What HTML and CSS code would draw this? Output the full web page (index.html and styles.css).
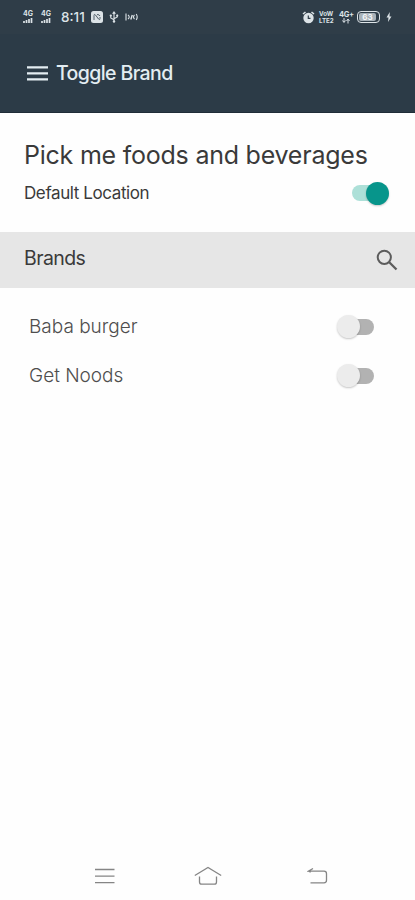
FILE: index.html
```html
<!DOCTYPE html>
<html lang="en">
<head>
<meta charset="utf-8">
<title>Toggle Brand</title>
<link rel="stylesheet" href="styles.css">
</head>
<body>
<div class="screen">
  <header class="top">
    <div class="status">
      <div class="status-left">
        <div class="signal"><span>4G</span><svg width="11" height="5" viewBox="0 0 11 5"><path d="M1 5V3M3.500 5V2M6 5V1M8.500 5V0" stroke="currentColor" stroke-width="1.700"/></svg></div>
        <div class="signal second"><span>4G</span><svg width="11" height="5" viewBox="0 0 11 5"><path d="M1 5V3M3.500 5V2M6 5V1M8.500 5V0" stroke="currentColor" stroke-width="1.700"/></svg></div>
        <span class="clock">8:11</span>
        <svg class="nfc" width="12" height="12" viewBox="0 0 12 12"><rect width="12" height="12" rx="2.500" fill="currentColor"/><path d="M3 9V4.500Q3 2.500 4.500 4L7.500 8Q9 9.500 9 7.500V6M6 3.500q2.500 0 3 1.500" fill="none" stroke="#53616c" stroke-width="1"/></svg>
        <svg class="usb" width="10" height="12" viewBox="0 0 10 13"><path d="M5 12V1M3.500 3 5 1l1.500 2M5 9.500 1.500 7.500V4.500M5 8.500l3.500-2V4" fill="none" stroke="currentColor" stroke-width="1.200"/><circle cx="5" cy="11.300" r="1.300" fill="currentColor"/><circle cx="1.500" cy="5" r="1.200" fill="currentColor"/><circle cx="8.500" cy="5" r="1.200" fill="currentColor"/></svg>
        <svg class="cast" width="13" height="12" viewBox="0 0 13 12"><path d="M1 2.500v7M3 4q2.500 2 0 4M9.500 4q-2 2 0 4M11.200 3q2 3 0 6" fill="none" stroke="currentColor" stroke-width="1.100"/><path d="M5.800 8.500 7.300 4" stroke="currentColor" stroke-width="1.400"/></svg>
      </div>
      <div class="status-right">
        <svg class="alarm" width="13" height="13" viewBox="0 0 13 13"><circle cx="6.500" cy="7" r="5.200" fill="currentColor"/><path d="M1 3 3.500 1M12 3 9.500 1" stroke="currentColor" stroke-width="1.600"/><path d="M6.300 4.500V7.300H8.500" fill="none" stroke="#2e3c47" stroke-width="1.200"/></svg>
        <div class="volte"><span>VoW</span><span>LTE2</span></div>
        <div class="data"><span>4G+</span><svg width="8" height="6" viewBox="0 0 8 6"><path d="M2 0v4M.5 2.500 2 4.500l1.500-2M6 5.500v-4M4.500 3 6 1l1.500 2" stroke="currentColor" fill="none"/></svg></div>
        <div class="battery"><span>63</span></div>
        <svg class="bolt" width="6" height="10" viewBox="0 0 6 10"><path d="M3.800 0 .5 5.500h2L2 10l3.500-5.500h-2z" fill="currentColor"/></svg>
      </div>
    </div>
    <div class="appbar">
      <svg class="menu" width="21" height="15" viewBox="0 0 21 15"><path d="M0 1.300h21M0 7.300h21M0 13.300h21" stroke="currentColor" stroke-width="2.300"/></svg>
      <h1>Toggle Brand</h1>
    </div>
  </header>
  <section class="place">
    <h2>Pick me foods and beverages</h2>
    <div class="location"><span>Default Location</span><span class="switch on"></span></div>
  </section>
  <div class="brands">
    <h3>Brands</h3>
    <svg width="22" height="22" viewBox="0 0 22 22" fill="none" stroke="#5c5c5c"><circle cx="8.300" cy="8.300" r="6.600" stroke-width="2"/><path d="m13 13 7.500 7.500" stroke-width="2.300"/></svg>
  </div>
  <ul class="list">
    <li><span>Baba burger</span><span class="switch"></span></li>
    <li><span>Get Noods</span><span class="switch"></span></li>
  </ul>
  <nav class="navbar">
    <svg width="20" height="16" viewBox="0 0 20 16" stroke="#858585"><path d="M0 1.500h19.500M0 8.200h19.500M0 14.700h19.500" stroke-width="1.300"/></svg>
    <svg class="home" width="28" height="20" viewBox="0 0 28 20" fill="none" stroke="#858585" stroke-width="1.300"><path d="M.8 9.500 14 1.500l13.200 8M5.500 10.500v5.500q0 2.200 2.200 2.200h12.600q2.200 0 2.200-2.200v-5.500"/></svg>
    <svg width="21" height="18" viewBox="0 0 21 18" fill="none" stroke="#858585" stroke-width="1.300"><path d="M6 1.500 1.500 4.200H17q2.500 0 2.500 2.500v6.600q0 2.500-2.500 2.500H3.500M1.500 4.200l2.200 1"/></svg>
  </nav>
</div>
</body>
</html>
```
FILE: styles.css
```css
* { box-sizing: border-box; }
body { margin: 0; background: #fefefe; font-family: Inter, "Liberation Sans", sans-serif; color: #3a3a3a; }
h1, h2, h3, ul { margin: 0; padding: 0; font-weight: 400; list-style: none; }
svg { display: block; flex: none; }
.screen { width: 415px; height: 900px; display: flex; flex-direction: column; }
.top { height: 113px; background: #2c3b47; border-bottom: 1px solid #202d38; color: #e3edf2; }
.status { height: 34px; padding: 0 23px; display: flex; justify-content: space-between; align-items: center; background: #2f3d48; color: #dce3e7; }
.status-left, .status-right { display: flex; align-items: center; height: 34px; }
.signal { width: 11px; height: 12px; font-size: 7px; font-weight: 700; line-height: 6px; }
.signal span { display: block; height: 7px; }
.second { margin-left: 7px; }
.clock { width: 26px; margin-left: 9px; font-size: 13.500px; font-weight: 500; line-height: 16px; white-space: nowrap; }
.nfc { margin-left: 4px; }
.usb { margin-left: 6px; }
.cast { margin-left: 6px; }
.volte { width: 16px; margin-left: 4px; font-size: 6.200px; font-weight: 700; line-height: 7px; }
.volte span { display: block; }
.data { width: 14px; height: 13px; margin-left: 4px; font-size: 7.500px; font-weight: 700; line-height: 7px; letter-spacing: -.4px; }
.data span { display: block; }
.data svg { margin-left: 3px; }
.battery { width: 23px; height: 12px; margin-left: 4px; border: 1.500px solid currentColor; border-radius: 4px; padding: 1px 3px 1px 1px; }
.battery span { display: block; height: 8px; border-radius: 2px; background: #a8b2b9; color: #f4f6f7; font-size: 8px; font-weight: 700; line-height: 8px; text-align: center; }
.bolt { margin-left: 6px; }
.appbar { height: 78px; padding-left: 27px; display: flex; align-items: center; }
h1 { margin-left: 8px; font-size: 19.500px; font-weight: 500; line-height: 26px; letter-spacing: -.6px; white-space: nowrap; }
.place { height: 119px; padding: 25px 26px 0 24px; }
h2 { font-size: 25px; line-height: 34px; letter-spacing: -.23px; white-space: nowrap; }
.location { display: flex; height: 42px; align-items: center; justify-content: space-between; font-size: 17px; letter-spacing: -.4px; }
.switch { width: 37px; height: 24px; display: grid; align-items: center; }
.switch::before, .switch::after { content: ""; grid-area: 1 / 1; }
.switch::before { width: 30px; height: 16px; border-radius: 8px; background: #b2b2b2; justify-self: end; }
.switch::after { width: 23px; height: 23px; border-radius: 50%; background: #ececec; box-shadow: 0 1px 2px rgba(0,0,0,.22); justify-self: start; }
.switch.on::before { background: #ade0d8; justify-self: start; }
.switch.on::after { background: #07958b; justify-self: end; }
.brands { height: 56px; padding: 0 17px 0 24px; display: flex; align-items: center; justify-content: space-between; background: #e6e6e6; }
h3 { padding-bottom: 4px; font-size: 19.500px; letter-spacing: -.6px; }
.list { padding: 14px 41px 0 29px; color: #4e4e4e; }
.list li { height: 49px; display: flex; align-items: center; justify-content: space-between; font-size: 19px; font-weight: 300; }
.navbar { margin-top: auto; height: 48px; padding: 0 87px 0 95px; display: flex; align-items: center; justify-content: space-between; }
.home { margin-right: 6px; }
```
